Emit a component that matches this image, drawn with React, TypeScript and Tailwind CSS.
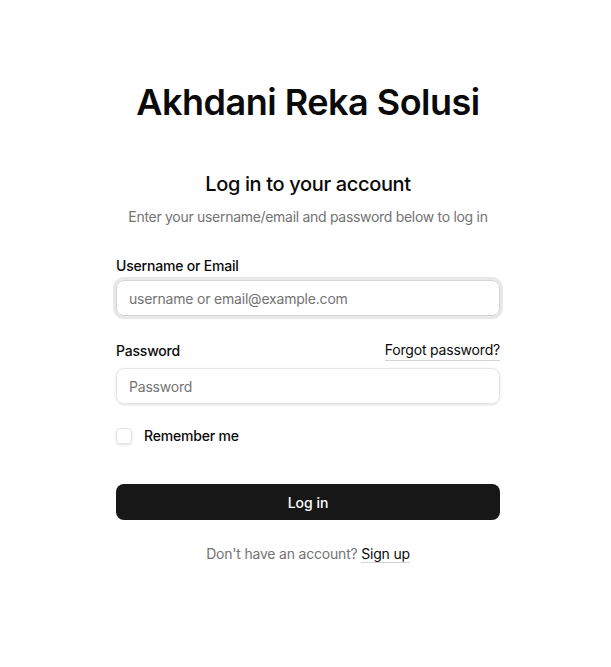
import React from "react";

export default function App() {
  return (
    <div className="min-h-screen bg-white flex justify-center pl-[5px]" style={{ fontFamily: "Inter, 'Noto Sans', sans-serif" }}>
      <div className="w-[384px] flex flex-col pt-[80px]">
        <h1 className="text-center text-[36px] leading-[44px] font-semibold tracking-[-0.5px] text-[#0a0a0a]">Akhdani Reka Solusi</h1>
        <div className="mt-[46px] flex flex-col items-center">
          <h2 className="text-[20px] leading-[28px] font-medium tracking-[-0.35px] text-[#0a0a0a]">Log in to your account</h2>
          <p className="mt-[9px] text-[14px] leading-[20px] tracking-[-0.3px] text-[#737373]">Enter your username/email and password below to log in</p>
        </div>
        <div className="mt-[29px] flex flex-col">
          <label className="text-[14px] leading-[20px] font-medium tracking-[-0.2px] text-[#0a0a0a]">Username or Email</label>
          <input
            className="mt-[4px] h-[36px] rounded-[8px] border border-[#d4d4d4] px-[12px] text-[14px] tracking-[-0.2px] outline-none ring-[3px] ring-[#e8e8e8] placeholder:text-[#737373]"
            placeholder="username or email@example.com"
          />
          <div className="mt-[24px] flex items-center justify-between">
            <label className="text-[14px] leading-[20px] font-medium tracking-[-0.2px] text-[#0a0a0a]">Password</label>
            <a className="text-[14px] leading-[20px] tracking-[-0.2px] text-[#0a0a0a] border-b border-[#d4d4d4]">Forgot password?</a>
          </div>
          <input
            type="password"
            className="mt-[7px] h-[36px] rounded-[8px] border border-[#e5e5e5] px-[12px] text-[14px] tracking-[-0.2px] outline-none shadow-sm placeholder:text-[#737373]"
            placeholder="Password"
          />
          <div className="mt-[22px] flex items-center gap-[12px]">
            <div className="w-[16px] h-[16px] rounded-[4px] border border-[#e5e5e5] shadow-sm" />
            <span className="text-[14px] leading-[20px] font-medium tracking-[-0.2px] text-[#0a0a0a]">Remember me</span>
          </div>
          <button className="mt-[38px] h-[36px] rounded-[8px] bg-[#171717] text-white text-[14px] font-medium">Log in</button>
          <p className="mt-[24px] text-center text-[14px] leading-[20px] tracking-[-0.2px] text-[#737373]">
            Don't have an account?{" "}
            <a className="text-[#0a0a0a] border-b border-[#d4d4d4]">Sign up</a>
          </p>
        </div>
      </div>
    </div>
  );
}
